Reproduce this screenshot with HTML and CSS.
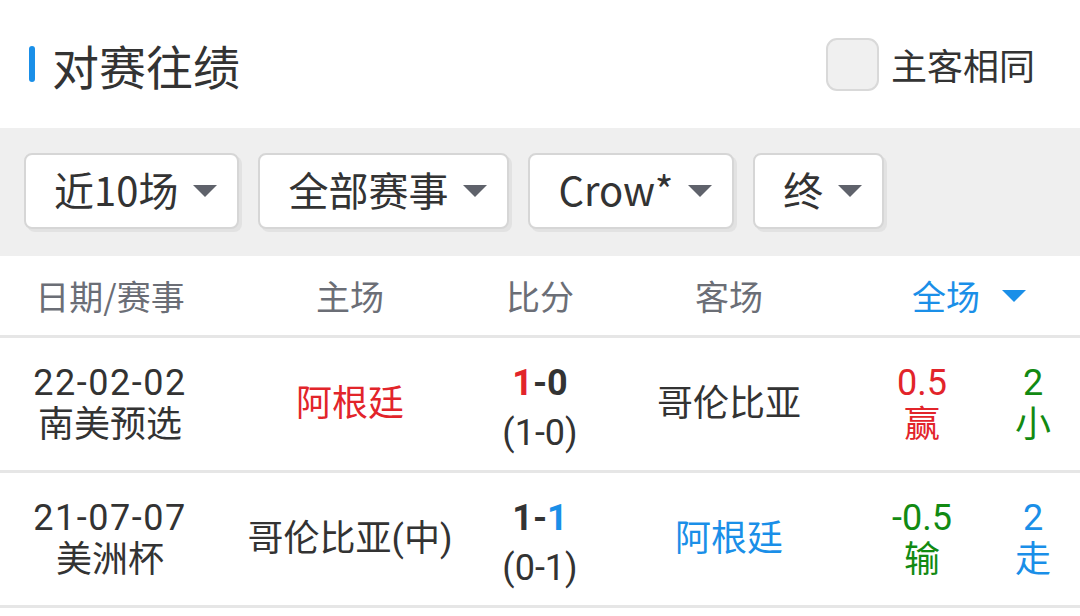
FILE: index.html
```html
<!DOCTYPE html>
<html lang="zh-CN">
<head>
<meta charset="utf-8">
<title>对赛往绩</title>
<link rel="stylesheet" href="styles.css">
</head>
<body>
<div class="page">
  <div class="header">
    <div class="title"><span class="title-bar"></span><span class="title-text">对赛往绩</span></div>
    <label class="same">
      <span class="checkbox"></span>
      <span class="same-text">主客相同</span>
    </label>
  </div>

  <div class="filters">
    <div class="select"><span class="select-text">近10场</span><span class="caret"></span></div>
    <div class="select"><span class="select-text">全部赛事</span><span class="caret"></span></div>
    <div class="select"><span class="select-text">Crow*</span><span class="caret"></span></div>
    <div class="select"><span class="select-text">终</span><span class="caret"></span></div>
  </div>

  <div class="table">
    <div class="row head">
      <div class="cell">日期/赛事</div>
      <div class="cell">主场</div>
      <div class="cell">比分</div>
      <div class="cell">客场</div>
      <div class="cell span2 blue">全场<span class="caret caret-blue"></span></div>
    </div>

    <div class="row">
      <div class="cell stack"><span class="date">22-02-02</span><span>南美预选</span></div>
      <div class="cell red">阿根廷</div>
      <div class="cell stack"><span class="score"><span class="red">1</span>-0</span><span class="half">(1-0)</span></div>
      <div class="cell">哥伦比亚</div>
      <div class="cell stack red"><span>0.5</span><span>赢</span></div>
      <div class="cell stack green"><span>2</span><span>小</span></div>
    </div>

    <div class="row">
      <div class="cell stack"><span class="date">21-07-07</span><span>美洲杯</span></div>
      <div class="cell">哥伦比亚(中)</div>
      <div class="cell stack"><span class="score">1-<span class="blue">1</span></span><span class="half">(0-1)</span></div>
      <div class="cell blue">阿根廷</div>
      <div class="cell stack green"><span>-0.5</span><span>输</span></div>
      <div class="cell stack blue"><span>2</span><span>走</span></div>
    </div>
  </div>
</div>
</body>
</html>
```

FILE: styles.css
```css
html, body {
  margin: 0;
  padding: 0;
  background: #ffffff;
}

body {
  font-family: "Noto Sans CJK SC", sans-serif;
  color: #333333;
}

.page {
  width: 1080px;
}

.header {
  height: 128px;
  display: flex;
  align-items: center;
  justify-content: space-between;
  padding: 0 45px 0 29px;
  box-sizing: border-box;
}

.title {
  display: flex;
  align-items: center;
  gap: 17px;
}

.title-bar {
  width: 6px;
  height: 36px;
  border-radius: 3px;
  background: #1a8fe8;
}

.title-text {
  font-size: 47px;
  line-height: 1;
  color: #333333;
}

.same {
  display: flex;
  align-items: center;
  gap: 12px;
}

.checkbox {
  width: 49px;
  height: 49px;
  border: 2px solid #d9d9d9;
  border-radius: 11px;
  background: #f0f0f0;
}

.same-text {
  font-size: 36px;
  line-height: 1;
  color: #333333;
}

.filters {
  height: 128px;
  background: #efefef;
  display: flex;
  align-items: center;
  gap: 19px;
  padding: 0 0 2px 24px;
  box-sizing: border-box;
}

.select {
  height: 76px;
  box-sizing: border-box;
  background: #ffffff;
  border: 2px solid #d6d6d6;
  border-radius: 8px;
  box-shadow: 3px 3px 0 #e2e2e2;
  display: flex;
  align-items: center;
  gap: 15px;
  padding: 0 20px 4px 28px;
}

.select-text {
  font-size: 40px;
  line-height: 1;
  color: #333333;
}

.caret {
  width: 0;
  height: 0;
  border-left: 12px solid transparent;
  border-right: 12px solid transparent;
  border-top: 12px solid #5f626b;
}

.select .caret {
  margin-top: 4px;
}

.caret-blue {
  border-top-color: #1a8fe8;
  margin-left: 22px;
}

.table {
  display: flex;
  flex-direction: column;
}

.row {
  display: grid;
  grid-template-columns: 220px 260px 120px 258px 128px 1fr;
  height: 135px;
  box-sizing: border-box;
  border-bottom: 3px solid #e6e6e6;
  font-family: Roboto, "Noto Sans CJK SC", sans-serif;
  font-size: 36px;
  line-height: 42px;
}

.row.head {
  height: 82px;
  font-family: "Noto Sans CJK SC", sans-serif;
  font-size: 34px;
  color: #6b6e76;
}

.cell {
  display: flex;
  align-items: center;
  justify-content: center;
  white-space: nowrap;
}

.span2 {
  grid-column: span 2;
}

.stack {
  flex-direction: column;
}

.date {
  letter-spacing: 1.5px;
}

.score {
  font-weight: bold;
}

.half {
  margin-top: 8px;
  margin-bottom: -8px;
}

.red {
  color: #e2242a;
}

.green {
  color: #128a12;
}

.blue {
  color: #1a8fe8;
}
```
